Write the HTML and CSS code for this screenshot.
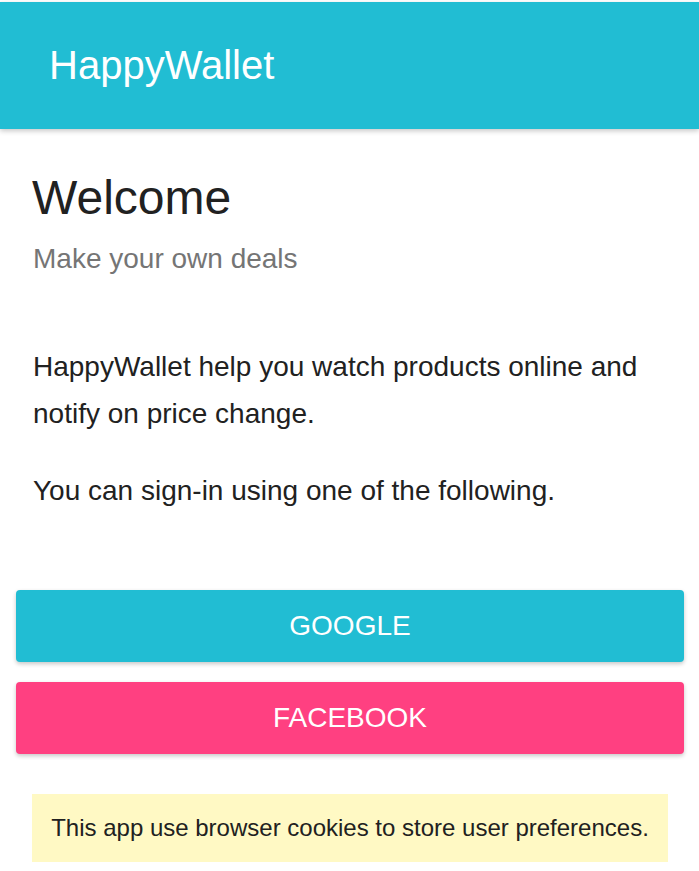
FILE: index.html
```html
<!DOCTYPE html>
<html>
<head>
<meta charset="utf-8">
<link rel="stylesheet" href="styles.css">
</head>
<body>
<div class="page">
  <header class="toolbar">HappyWallet</header>
  <main class="content">
    <h1 class="title">Welcome</h1>
    <div class="subtitle">Make your own deals</div>
    <p class="text first">HappyWallet help you watch products online and notify on price change.</p>
    <p class="text">You can sign-in using one of the following.</p>
  </main>
  <div class="actions">
    <button class="btn google">Google</button>
    <button class="btn facebook">Facebook</button>
  </div>
  <div class="cookie">This app use browser cookies to store user preferences.</div>
</div>
</body>
</html>
```
FILE: styles.css
```css
html, body {
  margin: 0;
  padding: 0;
  background: #ffffff;
}
body {
  font-family: "Liberation Sans", Arial, Helvetica, sans-serif;
}
.page {
  padding-top: 2px;
  width: 699px;
}
.toolbar {
  height: 127px;
  background: #21bdd3;
  color: #ffffff;
  font-size: 40px;
  display: flex;
  align-items: center;
  padding-left: 49px;
  box-shadow: 0 2px 5px rgba(0, 0, 0, 0.22);
  position: relative;
}
.content {
  padding: 0 33px;
}
.title {
  margin: 41px 0 0;
  font-size: 48px;
  font-weight: normal;
  line-height: 56px;
  color: #212121;
  margin-left: -1px;
}
.subtitle {
  margin-top: 17px;
  font-size: 28px;
  line-height: 32px;
  color: #757575;
}
.text {
  margin: 30px 0 0;
  font-size: 28px;
  line-height: 47px;
  color: #212121;
}
.text.first {
  margin-top: 68px;
}
.actions {
  margin-top: 76px;
  padding: 0 15px 0 16px;
  display: flex;
  flex-direction: column;
  gap: 20px;
}
.btn {
  height: 72px;
  border: none;
  border-radius: 4px;
  color: #ffffff;
  font-family: "Liberation Sans", Arial, Helvetica, sans-serif;
  font-size: 28px;
  text-transform: uppercase;
  box-shadow: 0 2px 4px rgba(0, 0, 0, 0.22);
  padding: 0;
}
.google {
  background: #21bdd3;
}
.facebook {
  background: #ff4081;
}
.cookie {
  margin: 40px 31px 0 32px;
  height: 68px;
  background: #fff9c4;
  color: #212121;
  font-size: 24px;
  display: flex;
  align-items: center;
  justify-content: center;
}
```
